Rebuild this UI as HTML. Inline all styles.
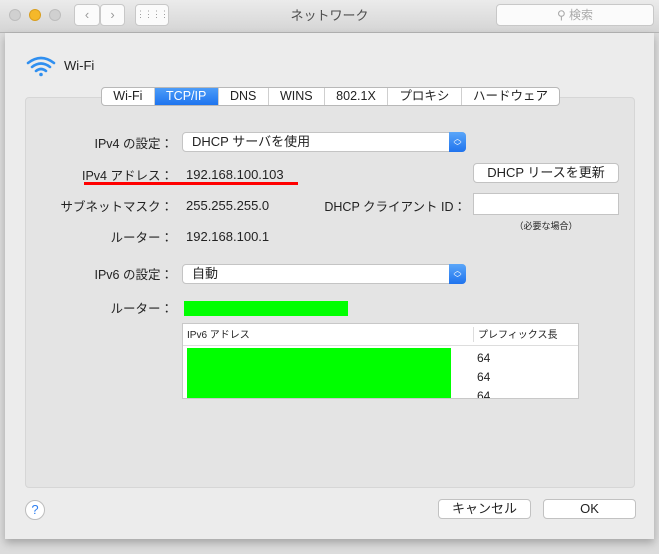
<!DOCTYPE html>
<html><head><meta charset="utf-8"><style>
*{box-sizing:border-box;margin:0;padding:0}
body{width:659px;height:554px;background:#dcdcdc;font-family:"Liberation Sans","Noto Sans CJK JP",sans-serif;font-size:13px;line-height:15px;color:#222;position:relative;overflow:hidden}
.abs{position:absolute}
.title{left:0;top:0;width:659px;height:33px;background:linear-gradient(#ebebeb,#d5d5d5);border-bottom:1px solid #b5b5b5}
.dot{width:12px;height:12px;border-radius:50%;top:9px;background:#d0d0d0;border:1px solid #bdbdbd}
.tb{background:#fbfbfb;border:1px solid #c8c8c8;border-radius:4px}
.sheet{left:5px;top:33px;width:649px;height:506px;background:#ececec;box-shadow:0 4px 8px rgba(0,0,0,.25)}
.box{left:25px;top:97px;width:610px;height:391px;background:#e4e4e4;border:1px solid #d6d6d6;border-radius:4px}
.tabs{left:101px;top:87px;height:19px;display:flex;background:#fff;border:1px solid #b8b8b8;border-radius:4px;overflow:hidden}
.tabs div{padding:0 11.3px;line-height:17px;border-right:1px solid #cfcfcf;font-size:12.5px}
.tabs div:last-child{border-right:none}
.tabs .on{background:linear-gradient(#4c9cf8,#1e74ef);color:#fff}
.lbl{text-align:right;font-size:12.5px;margin-top:2px}
.sel{background:#fff;border:1px solid #c4c4c4;border-radius:4px;height:20px;line-height:18px;padding-left:9px}
.arr{position:absolute;right:-1px;top:-1px;width:17px;height:20px;background:linear-gradient(#5aa6f9,#1f73ee);border-radius:0 4px 4px 0;color:#fff;font-size:8px;line-height:8px;text-align:center;padding-top:3px}
.btn{background:#fff;border:1px solid #c2c2c2;border-radius:4px;text-align:center;height:20px;line-height:18px}
.g{background:#00ff00}
</style></head><body>
<div class="abs title"></div>
<div class="abs dot" style="left:9px"></div>
<div class="abs dot" style="left:29px;background:#f5b82a;border-color:#d99e1e"></div>
<div class="abs dot" style="left:49px"></div>
<div class="abs tb" style="left:74px;top:4px;width:26px;height:22px;color:#999;text-align:center;line-height:20px">&#8249;</div>
<div class="abs tb" style="left:100px;top:4px;width:25px;height:22px;color:#999;text-align:center;line-height:20px">&#8250;</div>
<div class="abs tb" style="left:135px;top:4px;width:34px;height:22px;color:#999;text-align:center;line-height:18px;font-size:9px;letter-spacing:-1px">&#8942;&#8942;&#8942;&#8942;</div>
<div class="abs" style="left:0;width:659px;top:8px;text-align:center;color:#4d4d4d;font-size:13px">ネットワーク</div>
<div class="abs tb" style="left:496px;top:4px;width:158px;height:22px;color:#a9a9a9;text-align:center;line-height:20px;font-size:12px">&#9906; 検索</div>
<div class="abs sheet"></div>
<svg class="abs" style="left:25px;top:55px" width="32" height="22" viewBox="0 0 32 22"><g fill="none" stroke="#2f8ff0" stroke-width="2.6" stroke-linecap="round"><path d="M3 8 Q16 -2 29 8"/><path d="M7 12 Q16 5 25 12"/><path d="M11 16 Q16 12 21 16"/></g><circle cx="16" cy="19.5" r="1.8" fill="#2f8ff0"/></svg>
<div class="abs" style="left:64px;top:58px;font-size:13px">Wi-Fi</div>
<div class="abs box"></div>
<div class="abs tabs"><div>Wi-Fi</div><div class="on">TCP/IP</div><div>DNS</div><div>WINS</div><div>802.1X</div><div>プロキシ</div><div>ハードウェア</div></div>
<div class="abs lbl" style="left:60px;width:113px;top:135px">IPv4 の設定：</div>
<div class="abs sel" style="left:182px;top:132px;width:284px">DHCP サーバを使用<div class="arr">︿<br>﹀</div></div>
<div class="abs lbl" style="left:60px;width:113px;top:167px">IPv4 アドレス：</div>
<div class="abs" style="left:186px;top:167px">192.168.100.103</div>
<div class="abs" style="left:84px;top:182px;width:214px;height:3px;background:#f00"></div>
<div class="abs btn" style="left:473px;top:163px;width:146px">DHCP リースを更新</div>
<div class="abs lbl" style="left:40px;width:133px;top:198px">サブネットマスク：</div>
<div class="abs" style="left:186px;top:198px">255.255.255.0</div>
<div class="abs lbl" style="left:290px;width:176px;top:198px">DHCP クライアント ID：</div>
<div class="abs" style="left:473px;top:193px;width:146px;height:22px;background:#fff;border:1px solid #c4c4c4"></div>
<div class="abs" style="left:473px;width:146px;top:219px;text-align:center;font-size:9px">（必要な場合）</div>
<div class="abs lbl" style="left:60px;width:113px;top:229px">ルーター：</div>
<div class="abs" style="left:186px;top:229px">192.168.100.1</div>
<div class="abs lbl" style="left:60px;width:113px;top:266px">IPv6 の設定：</div>
<div class="abs sel" style="left:182px;top:264px;width:284px">自動<div class="arr">︿<br>﹀</div></div>
<div class="abs lbl" style="left:60px;width:113px;top:300px">ルーター：</div>
<div class="abs g" style="left:184px;top:301px;width:164px;height:15px"></div>
<div class="abs" style="left:182px;top:323px;width:397px;height:76px;background:#fff;border:1px solid #c8c8c8;overflow:hidden">
<div class="abs" style="left:0;top:0;width:395px;height:22px;border-bottom:1px solid #ddd"></div>
<div class="abs" style="left:290px;top:3px;width:1px;height:15px;background:#ddd"></div>
<div class="abs" style="left:4px;top:4px;font-size:10px">IPv6 アドレス</div>
<div class="abs" style="left:295px;top:4px;font-size:10px">プレフィックス長</div>
<div class="abs g" style="left:4px;top:24px;width:264px;height:52px"></div>
<div class="abs" style="left:294px;top:25px;font-size:12px;line-height:19px">64<br>64<br>64</div>
</div>
<div class="abs" style="left:25px;top:500px;width:20px;height:20px;border-radius:50%;background:#fff;border:1px solid #bdbdbd;color:#2f7ff0;text-align:center;line-height:18px;font-size:13px">?</div>
<div class="abs btn" style="left:438px;top:499px;width:93px">キャンセル</div>
<div class="abs btn" style="left:543px;top:499px;width:93px">OK</div>
</body></html>
